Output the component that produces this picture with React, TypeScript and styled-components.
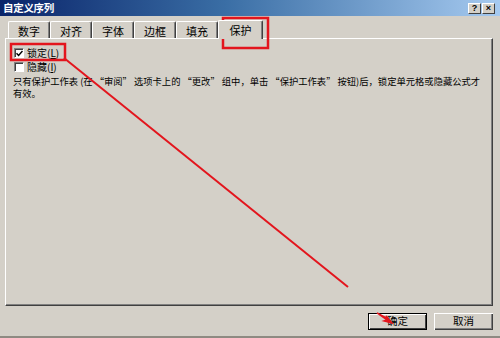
import React from "react";
import styled, { createGlobalStyle } from "styled-components";

const GlobalStyle = createGlobalStyle`
  html, body {
    margin: 0;
    padding: 0;
    background: #d4d0c8;
  }
  body {
    font-family: "Noto Sans CJK SC", "Liberation Sans", sans-serif;
    color: #000;
  }
`;

const Window = styled.div`
  position: relative;
  width: 500px;
  height: 338px;
  box-sizing: border-box;
  background: #d4d0c8;
  border-bottom: 2px solid #8e8a82;
  display: flex;
  flex-direction: column;
  overflow: hidden;
`;

const TitleBar = styled.div`
  height: 16px;
  display: flex;
  align-items: center;
  padding: 0 5px 0 3px;
  background: linear-gradient(to right, #0a246a 0%, #3a6ea5 45%, #a6caf0 100%);
`;

const Title = styled.span`
  color: #fff;
  font-weight: bold;
  font-size: 10.5px;
  line-height: 16px;
  letter-spacing: -0.3px;
`;

const CaptionButtons = styled.div`
  margin-left: auto;
  display: flex;
  gap: 1px;
`;

const CaptionButton = styled.div`
  width: 13px;
  height: 11px;
  box-sizing: border-box;
  background: #d4d0c8;
  border-top: 1px solid #fff;
  border-left: 1px solid #fff;
  border-right: 1px solid #404040;
  border-bottom: 1px solid #404040;
  display: flex;
  align-items: center;
  justify-content: center;
  font-family: "Liberation Sans", sans-serif;
  font-weight: bold;
  font-size: 9px;
  line-height: 1;
`;

const TabStrip = styled.div`
  display: flex;
  align-items: flex-end;
  height: 20px;
  margin-top: 2px;
  padding-left: 8px;
`;

const Tab = styled.div<{ $active?: boolean }>`
  width: ${(p) => (p.$active ? 45 : 42)}px;
  height: ${(p) => (p.$active ? 19 : 17)}px;
  box-sizing: border-box;
  border-top: 1px solid #fff;
  border-left: 1px solid #fff;
  border-right: 1px solid #404040;
  border-radius: 2px 2px 0 0;
  box-shadow: inset -1px 0 0 #808080;
  display: flex;
  align-items: center;
  justify-content: center;
  padding-top: ${(p) => (p.$active ? 0 : 2)}px;
  font-size: 11px;
  margin-bottom: ${(p) => (p.$active ? -1 : 0)}px;
  background: #d4d0c8;
  position: relative;
  z-index: ${(p) => (p.$active ? 1 : 0)};
`;

const Panel = styled.div`
  height: 268px;
  margin: 0 7px 0 5px;
  box-sizing: border-box;
  border-top: 1px solid #fff;
  border-left: 1px solid #fff;
  border-right: 1px solid #404040;
  border-bottom: 1px solid #404040;
  box-shadow: inset -1px -1px 0 #808080;
  padding: 7px 7px 0 7px;
  display: flex;
  flex-direction: column;
`;

const CheckRow = styled.label`
  display: flex;
  align-items: center;
  gap: 3px;
  height: 14px;
  margin-left: 1px;
  font-size: 10px;
  line-height: 1;
`;

const Box = styled.span`
  width: 10px;
  height: 10px;
  box-sizing: border-box;
  background: #fff;
  border-top: 1px solid #808080;
  border-left: 1px solid #808080;
  border-right: 1px solid #fff;
  border-bottom: 1px solid #fff;
  box-shadow: inset 1px 1px 0 #404040;
  display: flex;
  align-items: center;
  justify-content: center;
`;

const Hotkey = styled.span`
  text-decoration: underline;
`;

const Note = styled.div`
  margin-top: 1px;
  display: flex;
  flex-direction: column;
`;

const NoteLine = styled.div`
  font-size: 9.3px;
  line-height: 12px;
  height: 12px;
  white-space: nowrap;
`;

const Footer = styled.div`
  display: flex;
  justify-content: flex-end;
  gap: 7px;
  padding: 7px 7px 0 0;
`;

const Button = styled.button<{ $default?: boolean }>`
  width: 59px;
  height: 17px;
  box-sizing: border-box;
  padding: 0;
  background: #d4d0c8;
  font-family: "Noto Sans CJK SC", sans-serif;
  font-size: 10.5px;
  line-height: 1;
  color: #000;
  border: none;
  box-shadow: ${(p) =>
    p.$default
      ? "inset 0 0 0 1px #000, inset 1px 1px 0 1px #fff, inset -2px -2px 0 0 #404040"
      : "inset 1px 1px 0 #fff, inset -1px -1px 0 #404040, inset -2px -2px 0 #808080"};
`;

const Overlay = styled.svg`
  position: absolute;
  left: 0;
  top: 0;
  pointer-events: none;
`;

const CheckMark = () => (
  <svg width="7" height="7" viewBox="0 0 7 7">
    <path d="M0.5 3.2 L2.6 5.4 L6.5 1" stroke="#000" strokeWidth="1.5" fill="none" />
  </svg>
);

const tabs = ["数字", "对齐", "字体", "边框", "填充", "保护"];

export default function App() {
  return (
    <>
      <GlobalStyle />
      <Window>
        <TitleBar>
          <Title>自定义序列</Title>
          <CaptionButtons>
            <CaptionButton>?</CaptionButton>
            <CaptionButton>×</CaptionButton>
          </CaptionButtons>
        </TitleBar>

        <TabStrip>
          {tabs.map((t) => (
            <Tab key={t} $active={t === "保护"}>
              {t}
            </Tab>
          ))}
        </TabStrip>

        <Panel>
          <CheckRow>
            <Box>
              <CheckMark />
            </Box>
            <span>
              锁定(<Hotkey>L</Hotkey>)
            </span>
          </CheckRow>
          <CheckRow>
            <Box />
            <span>
              隐藏(<Hotkey>I</Hotkey>)
            </span>
          </CheckRow>
          <Note>
            <NoteLine>
              只有保护工作表 (在 “审阅” 选项卡上的 “更改” 组中，单击 “保护工作表” 按钮)后，锁定单元格或隐藏公式才
            </NoteLine>
            <NoteLine>有效。</NoteLine>
          </Note>
        </Panel>

        <Footer>
          <Button $default>确定</Button>
          <Button>取消</Button>
        </Footer>

        <Overlay width="500" height="338" viewBox="0 0 500 338">
          <rect x="11" y="44" width="54" height="16" fill="none" stroke="#e3151d" strokeWidth="2.5" />
          <rect x="223" y="18" width="45" height="30" fill="none" stroke="#e3151d" strokeWidth="2.5" />
          <line x1="64" y1="58" x2="348" y2="287" stroke="#e3151d" strokeWidth="2" />
          <path d="M377 313 L388 319 L386 316 L392 323 L384 321 L387 320 Z" fill="#e3151d" stroke="#e3151d" strokeWidth="1.5" />
        </Overlay>
      </Window>
    </>
  );
}
